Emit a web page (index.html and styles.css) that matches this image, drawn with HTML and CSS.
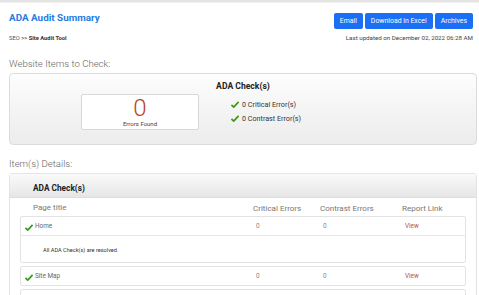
FILE: index.html
```html
<!DOCTYPE html>
<html>
<head>
<meta charset="utf-8">
<link rel="stylesheet" href="styles.css">
</head>
<body>
<div class="topbar"></div>
<header class="header">
  <div class="head-left">
    <h1 class="title">ADA Audit Summary</h1>
    <div class="crumb"><span class="crumb-seo">SEO</span> <span class="crumb-sep">&gt;&gt;</span> <b>Site Audit Tool</b></div>
  </div>
  <div class="head-right">
    <div class="btns">
      <button class="btn">Email</button>
      <button class="btn">Download in Excel</button>
      <button class="btn">Archives</button>
    </div>
    <div class="updated">Last updated on December 02, 2022 06:28 AM</div>
  </div>
</header>

<h2 class="section-title">Website Items to Check:</h2>
<div class="summary">
  <div class="summary-title">ADA Check(s)</div>
  <div class="summary-body">
    <div class="errors-box">
      <div class="errors-num">0</div>
      <div class="errors-label">Errors Found</div>
    </div>
    <ul class="checks">
      <li><svg class="tick" viewBox="0 0 10 8"><path d="M0.5 4.6 L3.4 7.2 L9.5 0.8" fill="none" stroke="#3a9a16" stroke-width="2.2"/></svg>0 Critical Error(s)</li>
      <li><svg class="tick" viewBox="0 0 10 8"><path d="M0.5 4.6 L3.4 7.2 L9.5 0.8" fill="none" stroke="#3a9a16" stroke-width="2.2"/></svg>0 Contrast Error(s)</li>
    </ul>
  </div>
</div>

<h2 class="section-title details">Item(s) Details:</h2>
<div class="panel">
  <div class="panel-head">ADA Check(s)</div>
  <div class="panel-body">
    <div class="thead">
      <div class="c1">Page title</div>
      <div class="c2">Critical Errors</div>
      <div class="c3">Contrast Errors</div>
      <div class="c4">Report Link</div>
    </div>
    <div class="group">
      <div class="row">
        <div class="c1"><svg class="tick" viewBox="0 0 10 8"><path d="M0.5 4.6 L3.4 7.2 L9.5 0.8" fill="none" stroke="#3a9a16" stroke-width="2.2"/></svg>Home</div>
        <div class="c2">0</div>
        <div class="c3">0</div>
        <div class="c4"><a class="view">View</a></div>
      </div>
      <div class="detail">All ADA Check(s) are resolved.</div>
    </div>
    <div class="group">
      <div class="row">
        <div class="c1"><svg class="tick" viewBox="0 0 10 8"><path d="M0.5 4.6 L3.4 7.2 L9.5 0.8" fill="none" stroke="#3a9a16" stroke-width="2.2"/></svg>Site Map</div>
        <div class="c2">0</div>
        <div class="c3">0</div>
        <div class="c4"><a class="view">View</a></div>
      </div>
    </div>
    <div class="group">
      <div class="row">
        <div class="c1"><svg class="tick" viewBox="0 0 10 8"><path d="M0.5 4.6 L3.4 7.2 L9.5 0.8" fill="none" stroke="#3a9a16" stroke-width="2.2"/></svg>Accommodations</div>
        <div class="c2">0</div>
        <div class="c3">0</div>
        <div class="c4"><a class="view">View</a></div>
      </div>
    </div>
  </div>
</div>
</body>
</html>
```
FILE: styles.css
```css
* { box-sizing: border-box; }
html, body { margin: 0; padding: 0; background: #fff; overflow: hidden; }
body { font-family: Roboto, "Liberation Sans", sans-serif; color: #333; width: 479px; height: 295px; }

.topbar { height: 3px; background: #e4e4e4; border-bottom: 1px solid #f0f0f0; }

.header { display: flex; justify-content: space-between; padding: 6px 6px 0 9px; }
.title { margin: 0; font-size: 9.9px; font-weight: 700; color: #2a7be4; line-height: 14px; padding-top: 2px; }
.crumb { margin-top: 10px; font-size: 5.8px; color: #555; }
.crumb b { color: #333; font-weight: 700; }
.crumb-sep { font-weight: 700; }

.head-right { display: flex; flex-direction: column; align-items: flex-end; }
.btns { display: flex; gap: 2px; margin-top: 4px; }
.btn { font-family: inherit; background: #1a6ff5; color: #fff; border: 0; border-radius: 2px; font-size: 6.9px; height: 16px; padding: 0 6px; line-height: 16px; }
.updated { font-size: 6.2px; color: #444; margin-top: 5px; }

.section-title { margin: 0; font-weight: 300; font-size: 9.6px; color: #666; padding: 15px 9px 0; line-height: 14px; }
.section-title.details { padding-top: 12px; }

.summary { margin: 2px 2px 0 9px; border: 1px solid #dcdcdc; border-radius: 4px; background: linear-gradient(#fdfdfd, #ececec); height: 72px; }
.summary-title { text-align: center; font-weight: 700; font-size: 8.6px; color: #222; padding-top: 7px; line-height: 10px; }
.summary-body { display: flex; align-items: flex-start; padding-top: 3px; }
.errors-box { margin-left: 71px; width: 118px; height: 36px; background: #fff; border: 1px solid #d8d8d8; border-radius: 2px; text-align: center; }
.errors-num { color: #b8462a; font-size: 24px; font-weight: 300; line-height: 22px; padding-top: 2px; }
.errors-label { font-size: 6px; color: #444; line-height: 9px; }
.checks { list-style: none; margin: 0 0 0 32px; padding: 0; font-size: 7.2px; color: #333; }
.checks li { display: flex; align-items: center; height: 14px; }
.checks li:first-child { margin-top: 3px; }
.tick { width: 8px; height: 7px; margin-right: 3px; }

.panel { margin: 2px 2px 0 9px; border: 1px solid #e4e4e4; border-radius: 3px; }
.panel-head { height: 24px; background: linear-gradient(#fafafa, #e6e6e6); border-bottom: 1px solid #dedede; font-weight: 700; font-size: 8.3px; color: #222; padding-left: 23px; line-height: 28px; }
.panel-body { padding: 0 10px 0 10px; }
.thead { display: flex; font-size: 8px; color: #777; height: 18px; line-height: 21px; font-weight: 400; }
.c1 { width: 233px; padding-left: 13px; display: flex; align-items: center; }
.c2 { width: 67px; }
.c3 { width: 82px; }
.c4 { flex: 1; }
.thead .c1 { padding-left: 13px; }

.group { border: 1px solid #e3e3e3; border-radius: 2px; margin-bottom: 3px; }
.row { display: flex; height: 18px; font-size: 6.4px; color: #777; align-items: center; }
.row .c1 { padding-left: 4px; color: #666; }
.row .c2 { padding-left: 2px; color: #888; }
.row .c3 { padding-left: 2px; color: #888; }
.row .c4 { padding-left: 2px; }
.row .tick { width: 8px; height: 7px; margin-right: 2px; margin-top: 3px; }
.view { color: #b8552e; }
.detail { border-top: 1px solid #e6e6e6; height: 27px; font-size: 5.6px; color: #333; padding-left: 22px; line-height: 28px; }
```
